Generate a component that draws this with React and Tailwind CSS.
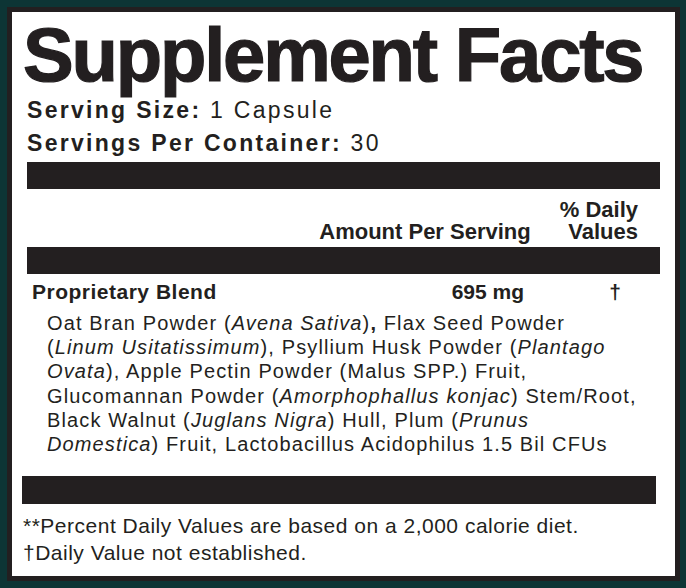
import React from "react";

const ink = "text-[#231f20]";

function Bar({ className }) {
  return <div className={`h-[27px] bg-[#231f20] ${className}`} />;
}

export default function App() {
  return (
    <div className="w-[686px] h-[588px] bg-[#0d3535] p-[7px] font-['Liberation_Sans',Arial,sans-serif]">
      <div className={`h-[574px] w-[673px] border-[5px] border-[#231f20] bg-white ${ink}`}>
        {/* heading */}
        <h1 className="pt-[5px] pl-[11px] text-[76px] leading-none font-bold tracking-[-2.2px] whitespace-nowrap [-webkit-text-stroke:1.2px_#231f20]">
          Supplement Facts
        </h1>
        <div className="pt-[1px] pl-[15px] text-[23px] leading-[33px] tracking-[2.3px] whitespace-nowrap">
          <div>
            <span className="font-bold">Serving Size:</span> 1 Capsule
          </div>
          <div>
            <span className="font-bold">Servings Per Container:</span> 30
          </div>
        </div>

        <Bar className="mt-[2px] ml-[15px] mr-[15px]" />

        {/* column header */}
        <div className="flex items-end justify-end gap-[29px] pr-[37px] pt-[10px] text-[22px] leading-[22px] font-bold">
          <div>Amount Per Serving</div>
          <div className="text-right">
            % Daily
            <br />
            Values
          </div>
        </div>

        <Bar className="mt-[4px] ml-[15px] mr-[15px]" />

        {/* blend */}
        <div className="flex mt-[6px] pl-[20px] pr-[30px] text-[21px] leading-[24px] font-bold">
          <div className="flex-1 tracking-[0.5px]">Proprietary Blend</div>
          <div className="mr-[61px]">695 mg</div>
          <div className="w-[60px] text-center">†</div>
        </div>
        <div className="mt-[7px] pl-[35px] text-[20px] leading-[24.2px] tracking-[1.12px] whitespace-nowrap">
          <div>
            Oat Bran Powder (<i>Avena Sativa</i>)<b>,</b> Flax Seed Powder
          </div>
          <div>
            (<i>Linum Usitatissimum</i>), Psyllium Husk Powder (<i>Plantago</i>
          </div>
          <div>
            <i>Ovata</i>), Apple Pectin Powder (Malus SPP.) Fruit,
          </div>
          <div>
            Glucomannan Powder (<i>Amorphophallus konjac</i>) Stem/Root,
          </div>
          <div>
            Black Walnut (<i>Juglans Nigra</i>) Hull, Plum (<i>Prunus</i>
          </div>
          <div>
            <i>Domestica</i>) Fruit, Lactobacillus Acidophilus 1.5 Bil CFUs
          </div>
        </div>

        <Bar className="mt-[20px] ml-[10px] mr-[19px] h-[28px]" />

        {/* footnotes */}
        <div className="pl-[11px] text-[21px] leading-[22px] tracking-[0.5px] whitespace-nowrap">
          <div className="mt-[11px]">**Percent Daily Values are based on a 2,000 calorie diet.</div>
          <div className="mt-[5px]">†Daily Value not established.</div>
        </div>
      </div>
    </div>
  );
}
